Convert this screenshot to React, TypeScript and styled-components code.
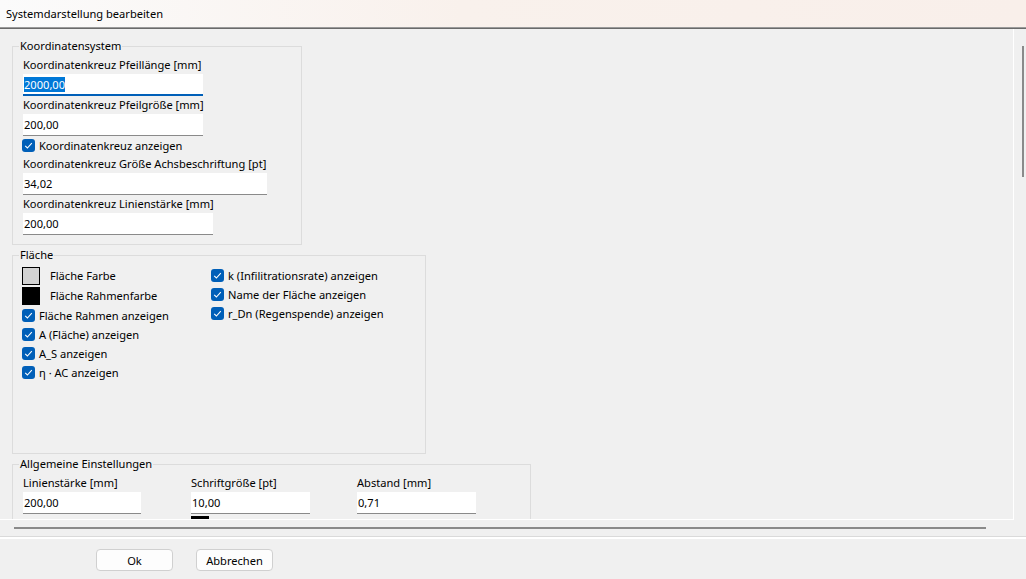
import { createGlobalStyle, styled } from "styled-components";

const GlobalStyle = createGlobalStyle`
  html, body {
    margin: 0;
    padding: 0;
  }
  body {
    font-family: "Segoe UI", "Noto Sans", sans-serif;
    font-size: 11.1px;
    color: #000;
    background: #f0f0f0;
  }
`;

const Window = styled.div`
  width: 1026px;
  height: 579px;
  display: flex;
  flex-direction: column;
  background: #f0f0f0;
  overflow: hidden;
`;

const TitleBar = styled.div`
  flex: none;
  height: 27px;
  display: flex;
  align-items: center;
  padding-left: 6px;
  background: linear-gradient(90deg, #fbfbfb 0%, #f9f1ec 45%, #f9efea 100%);
  border-bottom: 1px solid #9a9a9a;
  box-shadow: 0 1px 0 #6a6a6a;
  margin-bottom: 1px;
`;

const ScrollFrame = styled.div`
  flex: none;
  display: grid;
  grid-template-columns: 1014px 12px;
  grid-template-rows: 491px 16px;
`;

const Viewport = styled.div`
  box-sizing: border-box;
  overflow: hidden;
  padding: 9px 0 0 12px;
  border-right: 1px solid #fff;
  border-bottom: 1px solid #fff;
`;

const VTrack = styled.div`
  padding: 17px 0 0 8px;
`;

const VThumb = styled.div`
  width: 2px;
  height: 131px;
  background: #8a8a8a;
`;

const HTrack = styled.div`
  padding: 7px 0 0 14px;
`;

const HThumb = styled.div`
  width: 972px;
  height: 2px;
  background: #8a8a8a;
`;

const Separator = styled.div`
  flex: none;
  border-top: 1px solid #dadada;
  border-bottom: 2px solid #fff;
`;

const Footer = styled.div`
  flex: 1;
  display: flex;
  gap: 23px;
  padding: 10px 0 0 96px;
`;

const Button = styled.button`
  box-sizing: border-box;
  width: 77px;
  height: 22px;
  border: 1px solid #d0d0d0;
  border-radius: 4px;
  background: #fdfdfd;
  font: inherit;
  color: #000;
  padding: 1px 0 0;
`;

const Group = styled.fieldset<{ $width: number; $height?: number }>`
  box-sizing: border-box;
  width: ${(p) => p.$width}px;
  ${(p) => (p.$height ? `height: ${p.$height}px;` : "")}
  min-width: 0;
  margin: 0 0 2px 0;
  padding: 2px 10px 9px 10px;
  border: 1px solid #dcdcdc;
`;

const Legend = styled.legend`
  padding: 0 1px;
  margin-left: -4px;
  line-height: 16px;
`;

const Label = styled.div`
  line-height: 16px;
  padding-top: 1px;
  margin-bottom: 1px;
  white-space: nowrap;
`;

const Field = styled.div<{ $width: number; $focused?: boolean }>`
  box-sizing: border-box;
  width: ${(p) => p.$width}px;
  height: 22px;
  background: #fff;
  border-bottom: ${(p) => (p.$focused ? "2px solid #005fb8" : "1px solid #8a8a8a")};
  padding: 0 2px 0 1px;
  display: flex;
  align-items: center;
`;

const Selected = styled.span`
  background: #0078d7;
  color: #fff;
  line-height: 15px;
`;

const CheckRow = styled.div`
  height: 19px;
  display: flex;
  align-items: center;
  gap: 4px;
  white-space: nowrap;
`;

const CheckBox = styled.span`
  flex: none;
  width: 13px;
  height: 13px;
  margin-left: -1px;
  border-radius: 3px;
  background: #005fb8;
  display: inline-flex;
  align-items: center;
  justify-content: center;
`;

const SwatchRow = styled.div`
  height: 20px;
  display: flex;
  align-items: flex-start;
  white-space: nowrap;
`;

const Swatch = styled.span<{ $color: string }>`
  box-sizing: border-box;
  flex: none;
  width: 18px;
  height: 18px;
  margin: 1px 10px 0 -1px;
  background: ${(p) => p.$color};
  border: 1px solid #000;
`;

const SwatchLabel = styled.span`
  line-height: 16px;
  margin-top: 2px;
`;

const AreaGrid = styled.div`
  display: grid;
  grid-template-columns: 189px auto;
  padding-top: 1px;
`;

const Column = styled.div`
  display: flex;
  flex-direction: column;
`;

const GeneralGrid = styled.div`
  display: grid;
  grid-template-columns: 168px 166px auto;
`;

const Marker = styled.div`
  width: 18px;
  height: 3px;
  margin-top: 2px;
  background: #000;
`;

function Check({ label }: { label: string }) {
  return (
    <CheckRow>
      <CheckBox>
        <svg width="9" height="9" viewBox="0 0 9 9">
          <path d="M1.2 4.8 L3.4 7 L7.8 2.2" fill="none" stroke="#fff" strokeWidth="1.1" />
        </svg>
      </CheckBox>
      {label}
    </CheckRow>
  );
}

export default function App() {
  return (
    <Window>
      <GlobalStyle />
      <TitleBar>Systemdarstellung bearbeiten</TitleBar>
      <ScrollFrame>
        <Viewport>
          <Group $width={290}>
            <Legend>Koordinatensystem</Legend>
            <Label>Koordinatenkreuz Pfeillänge [mm]</Label>
            <Field $width={180} $focused>
              <Selected>2000,00</Selected>
            </Field>
            <Label>Koordinatenkreuz Pfeilgröße [mm]</Label>
            <Field $width={180}>200,00</Field>
            <Check label="Koordinatenkreuz anzeigen" />
            <Label>Koordinatenkreuz Größe Achsbeschriftung [pt]</Label>
            <Field $width={244}>34,02</Field>
            <Label>Koordinatenkreuz Linienstärke [mm]</Label>
            <Field $width={190}>200,00</Field>
          </Group>
          <Group $width={414} $height={207}>
            <Legend>Fläche</Legend>
            <AreaGrid>
              <Column>
                <SwatchRow>
                  <Swatch $color="#d3d3d3" />
                  <SwatchLabel>Fläche Farbe</SwatchLabel>
                </SwatchRow>
                <SwatchRow>
                  <Swatch $color="#000" />
                  <SwatchLabel>Fläche Rahmenfarbe</SwatchLabel>
                </SwatchRow>
                <Check label="Fläche Rahmen anzeigen" />
                <Check label="A (Fläche) anzeigen" />
                <Check label="A_S anzeigen" />
                <Check label="η · AC anzeigen" />
              </Column>
              <Column>
                <Check label="k (Infilitrationsrate) anzeigen" />
                <Check label="Name der Fläche anzeigen" />
                <Check label="r_Dn (Regenspende) anzeigen" />
              </Column>
            </AreaGrid>
          </Group>
          <Group $width={519}>
            <Legend>Allgemeine Einstellungen</Legend>
            <GeneralGrid>
              <div>
                <Label>Linienstärke [mm]</Label>
                <Field $width={118}>200,00</Field>
              </div>
              <div>
                <Label>Schriftgröße [pt]</Label>
                <Field $width={119}>10,00</Field>
                <Marker />
              </div>
              <div>
                <Label>Abstand [mm]</Label>
                <Field $width={119}>0,71</Field>
              </div>
            </GeneralGrid>
          </Group>
        </Viewport>
        <VTrack>
          <VThumb />
        </VTrack>
        <HTrack>
          <HThumb />
        </HTrack>
        <div />
      </ScrollFrame>
      <Separator />
      <Footer>
        <Button>Ok</Button>
        <Button>Abbrechen</Button>
      </Footer>
    </Window>
  );
}
